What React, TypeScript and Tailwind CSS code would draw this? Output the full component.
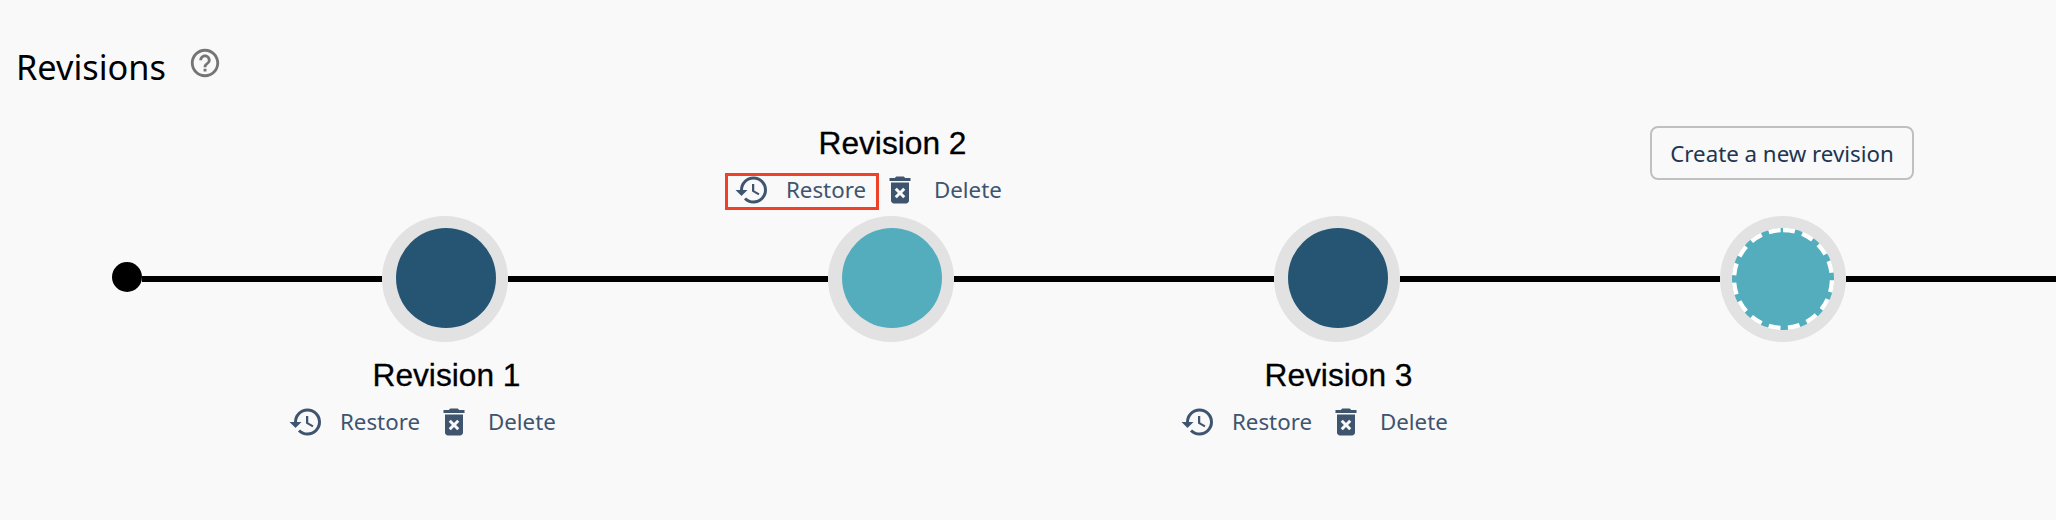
import type { ReactNode } from "react";
import { MdDeleteForever, MdHelpOutline, MdHistory } from "react-icons/md";

const uiFont = "font-['Noto_Sans','Open_Sans',sans-serif]";

function Actions({ highlighted = false }: { highlighted?: boolean }) {
  return (
    <div className={`flex h-9 w-[446px] items-center pl-[66px] text-[22.3px] leading-[30px] text-[#3e546f] ${uiFont}`}>
      <button
        className={`-mr-3 -ml-[9px] flex w-[154px] items-center pl-[9px] ${highlighted ? "mt-[3px] h-[37px] pb-[3px] outline-[3px] -outline-offset-3 outline-[#ee4128]" : "h-9"}`}
      >
        <MdHistory size={36} className="shrink-0" />
        <span className="ml-4">Restore</span>
      </button>
      <button className="ml-[15px] flex h-9 items-center">
        <MdDeleteForever size={36} />
        <span className="ml-4">Delete</span>
      </button>
    </div>
  );
}

function Title({ children }: { children: ReactNode }) {
  return (
    <h2 className="ml-[3px] font-['Liberation_Sans',Arial,sans-serif] text-[31.7px] leading-[34px] [-webkit-text-stroke:0.3px_black]">
      {children}
    </h2>
  );
}

function Node({ color }: { color: string }) {
  return (
    <div className="h-[126px] w-[126px] shrink-0 rounded-full bg-[#e2e2e2] pt-3 pl-3.5">
      <div className={`h-[100px] w-[100px] rounded-full ${color}`} />
    </div>
  );
}

function PendingNode() {
  return (
    <div className="h-[126px] w-[126px] shrink-0 rounded-full bg-[#e2e2e2] p-3">
      <svg viewBox="0 0 102 102" className="h-[102px] w-[102px]">
        <circle cx="51" cy="51" r="51" fill="#53adbd" />
        <circle
          cx="51"
          cy="51"
          r="49"
          fill="none"
          stroke="#fff"
          strokeWidth="4.4"
          strokeDasharray="12 7.53"
          transform="rotate(-90 51 51)"
        />
      </svg>
    </div>
  );
}

function Segment({ width }: { width: string }) {
  return <div className={`mt-[60px] h-1.5 shrink-0 bg-black ${width}`} />;
}

export default function App() {
  return (
    <main className="h-[520px] w-[2056px] overflow-hidden bg-[#f9f9f9] text-black">
      <header className={`flex h-[126px] items-start pl-4 ${uiFont}`}>
        <h1 className="mt-[43px] w-[172px] text-[34.3px] leading-[48px]">Revisions</h1>
        <MdHelpOutline size={34} className="mt-[46px] text-[#757575]" />
      </header>

      <section className="grid h-[90px] grid-cols-[446px_446px_446px_446px] pl-[222px]">
        <div className="col-start-2 flex flex-col items-center">
          <Title>Revision 2</Title>
          <div className="mt-3">
            <Actions highlighted />
          </div>
        </div>
        <div className="col-start-4 flex justify-center pr-0.5">
          <button className={`h-[54px] w-[264px] rounded-lg border-2 border-[#c0c0c0] pt-0.5 text-[22.3px] leading-[30px] text-[#203550] ${uiFont}`}>
            Create a new revision
          </button>
        </div>
      </section>

      <section className="flex items-start pl-28">
        <div className="mt-[46px] h-[30px] w-[30px] shrink-0 rounded-full bg-black" />
        <Segment width="w-[240px]" />
        <Node color="bg-[#255573]" />
        <Segment width="w-[320px]" />
        <Node color="bg-[#53adbd]" />
        <Segment width="w-[320px]" />
        <Node color="bg-[#255573]" />
        <Segment width="w-[320px]" />
        <PendingNode />
        <Segment width="w-[210px]" />
      </section>

      <section className="grid grid-cols-[446px_446px_446px] pl-[222px] pt-4">
        <div className="flex flex-col items-center">
          <Title>Revision 1</Title>
          <div className="mt-3">
            <Actions />
          </div>
        </div>
        <div className="col-start-3 flex flex-col items-center">
          <Title>Revision 3</Title>
          <div className="mt-3">
            <Actions />
          </div>
        </div>
      </section>
    </main>
  );
}
